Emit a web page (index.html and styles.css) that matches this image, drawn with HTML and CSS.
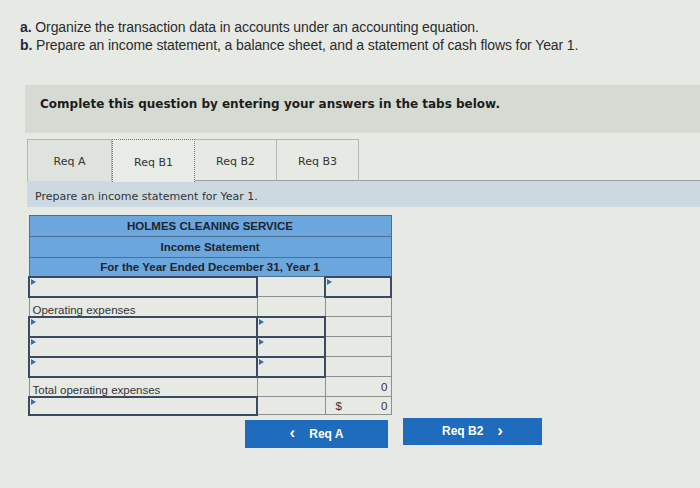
FILE: index.html
```html
<!DOCTYPE html>
<html>
<head>
<meta charset="utf-8">
<link rel="stylesheet" href="styles.css">
</head>
<body>
<div class="page">
  <div class="intro">
    <p><b class="mk">a.</b> Organize the transaction data in accounts under an accounting equation.</p>
    <p><b class="mk">b.</b> Prepare an income statement, a balance sheet, and a statement of cash flows for Year 1.</p>
  </div>
  <div class="banner">Complete this question by entering your answers in the tabs below.</div>
  <div class="tabs">
    <div class="tab t1">Req A</div>
    <div class="tab t2 active">Req B1</div>
    <div class="tab t3">Req B2</div>
    <div class="tab t4">Req B3</div>
  </div>
  <div class="band">Prepare an income statement for Year 1.</div>
  <table class="stmt">
    <colgroup><col class="c1"><col class="c2"><col class="c3"></colgroup>
    <tr class="hd h1"><td colspan="3">HOLMES CLEANING SERVICE</td></tr>
    <tr class="hd h2"><td colspan="3">Income Statement</td></tr>
    <tr class="hd h3"><td colspan="3">For the Year Ended December 31, Year 1</td></tr>
    <tr class="r"><td class="in"><span class="tri"></span></td><td></td><td class="in"><span class="tri"></span></td></tr>
    <tr class="r"><td class="lbl">Operating expenses</td><td></td><td></td></tr>
    <tr class="r"><td class="in"><span class="tri"></span></td><td class="in"><span class="tri"></span></td><td></td></tr>
    <tr class="r"><td class="in"><span class="tri"></span></td><td class="in"><span class="tri"></span></td><td></td></tr>
    <tr class="r"><td class="in"><span class="tri"></span></td><td class="in"><span class="tri"></span></td><td></td></tr>
    <tr class="r"><td class="lbl">Total operating expenses</td><td></td><td class="num">0</td></tr>
    <tr class="r"><td class="in"><span class="tri"></span></td><td></td><td class="num"><span class="dol">$</span>0</td></tr>
  </table>
  <div class="nav">
    <div class="btn prev"><span class="chev">&lsaquo;</span>Req A</div>
    <div class="btn next">Req B2<span class="chev">&rsaquo;</span></div>
  </div>
</div>
</body>
</html>
```
FILE: styles.css
```css
* { box-sizing: border-box; }
html, body { margin: 0; padding: 0; }
body {
  width: 700px;
  height: 488px;
  overflow: hidden;
  background: #e7eae4;
  font-family: "Liberation Sans", Arial, sans-serif;
  color: #222;
}
.page { padding-top: 18px; }
.intro { padding-left: 20px; }
.intro p {
  margin: 0;
  font-size: 14px;
  line-height: 18px;
  color: #2a2a2e;
  letter-spacing: -0.1px;
}
.mk { font-weight: bold; color: #1f2a44; }
.banner {
  margin: 31px 0 0 25px;
  height: 48px;
  background: #d5dad2;
  padding: 12px 0 0 15px;
  font-family: "DejaVu Sans", Verdana, sans-serif;
  font-weight: bold;
  font-size: 12px;
  color: #1c1c1c;
}
.tabs {
  display: flex;
  margin: 6px 0 0 27px;
  height: 42px;
  border-bottom: 1px solid #9a9f9a;
}
.tab {
  height: 42px;
  border: 1px solid #b4b8b3;
  border-bottom: none;
  display: flex;
  align-items: center;
  justify-content: center;
  padding-top: 2px;
  font-family: "DejaVu Sans", Verdana, sans-serif;
  font-size: 11px;
  color: #333;
}
.t1 { width: 85px; background: #dfe3dd; }
.t2 { width: 83px; }
.t3 { width: 82px; border-left: none; }
.t4 { width: 82px; border-left: none; }
.tab.active {
  border: 1px dotted #6f736f;
  border-bottom: none;
  height: 43px;
  margin-bottom: -1px;
  background: #e9ece6;
}
.band {
  margin-left: 27px;
  height: 26px;
  background: #cdd9e1;
  padding: 9px 0 0 8px;
  font-family: "DejaVu Sans", Verdana, sans-serif;
  font-size: 11px;
  color: #333;
}
.stmt {
  margin: 8px 0 0 28px;
  border-collapse: collapse;
  width: 362px;
  table-layout: fixed;
}
.c1 { width: 228px; }
.c2 { width: 68px; }
.c3 { width: 66px; }
.stmt td {
  border: 1px solid #8d918d;
  padding: 0 3px;
  font-size: 11.5px;
  color: #333;
  position: relative;
}
.hd td {
  background: #6ba6dc;
  text-align: center;
  font-weight: bold;
  color: #1e2430;
  border-color: #4d6f93;
}
.h1 td { height: 21px; }
.h2 td { height: 21px; }
.h3 td { height: 19px; }
.r td { height: 20px; }
.r:last-child td { height: 18px; }
.stmt td.in { border: 2px solid #3b4a63; }
.tri {
  position: absolute;
  left: 1px;
  top: 1px;
  width: 0;
  height: 0;
  border-top: 3px solid transparent;
  border-bottom: 3px solid transparent;
  border-left: 5px solid #3a6fae;
}
.lbl { vertical-align: bottom; padding-bottom: 1px; }
.num { text-align: right; padding-right: 4px; }
.dol { float: left; padding-left: 7px; }
.nav {
  display: flex;
  gap: 15px;
  margin: 2px 0 0 245px;
}
.btn {
  height: 28px;
  background: #1f6cbf;
  color: #fff;
  font-weight: bold;
  font-size: 12px;
  display: flex;
  align-items: center;
  justify-content: center;
}
.prev { width: 143px; margin-top: 2px; }
.next { width: 139px; height: 27px; }
.chev { font-size: 17px; font-weight: bold; line-height: 1; padding-bottom: 2px; }
.prev .chev { margin-right: 14px; }
.next .chev { margin-left: 14px; }
```
